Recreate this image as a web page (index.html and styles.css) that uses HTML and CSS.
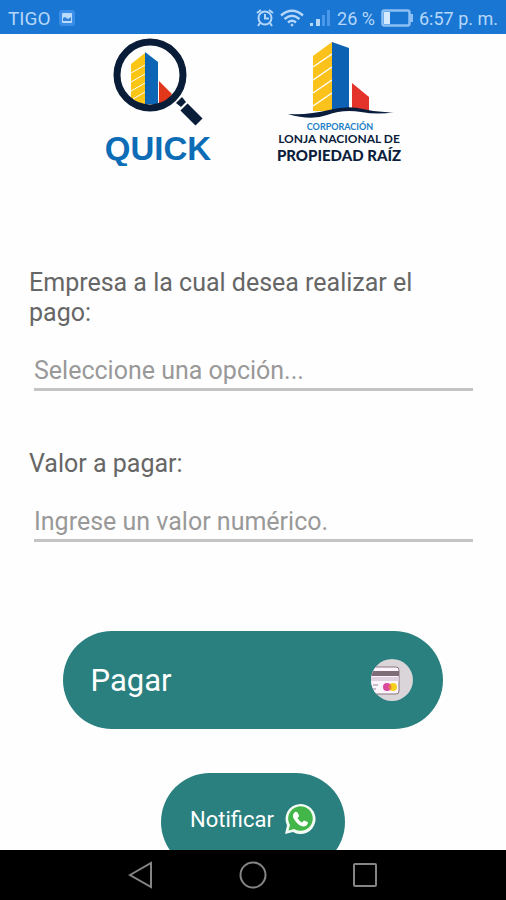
FILE: index.html
```html
<!DOCTYPE html>
<html lang="es">

<head>
    <meta charset="UTF-8" />
    <meta name="viewport" content="width=device-width, initial-scale=1.0" />
    <title>Quick - Pagos</title>
    <link rel="stylesheet" href="styles.css">
</head>

<body>

    <header class="status">
        <span class="carrier">TIGO</span>
        <svg class="status-photo" width="16" height="16" viewBox="0 0 16 16">
            <rect width="16" height="16" rx="3" fill="#3b8ee8" />
            <rect x="3" y="3" width="10" height="10" rx="1" fill="#b9dcfc" />
            <path d="M4 11V8l2-1 3 2 3-2v4z" fill="#3583db" />
        </svg>
        <div class="status-right">
            <svg width="18" height="20" viewBox="0 0 18 20" fill="none" stroke="#b5d7fa" stroke-width="2">
                <circle cx="9" cy="10" r="6.5" />
                <path d="M9 6v4.500h4M1 5l4-3M17 5l-4-3M4 15l-2 3M14 15l2 3" />
            </svg>
            <svg width="24" height="20" viewBox="0 0 24 20" fill="none" stroke="#b5d7fa" stroke-width="2.400">
                <path d="M1 7.500Q12-2 23 7.500M4.500 11q7.500-6.500 15 0M8 14.500q4-3.500 8 0" />
                <circle cx="12" cy="17" r="1" fill="#b5d7fa" stroke-width="1" />
            </svg>
            <svg width="21" height="18" viewBox="0 0 21 18" fill="#b5d7fa">
                <path d="M0 14h3v3H0zM6 10h4v7H6z" />
                <path d="M12 6h3v11h-3zM17 1h3v16h-3z" fill="#4a98e9" />
            </svg>
            <span>26 %</span>
            <svg width="32" height="18" viewBox="0 0 32 18">
                <rect x="1.500" y="1.500" width="27" height="15" rx="2" fill="none" stroke="#8dc0f5" stroke-width="2.500" />
                <path d="M3 3h6v12H3z" fill="#d5eaff" />
                <path d="M29 5h3v8h-3z" fill="#8dc0f5" />
            </svg>
            <span>6:57 p. m.</span>
        </div>
    </header>

    <main class="page">
        <div class="logos">
            <svg class="logo-quick" width="110" height="130" viewBox="0 0 110 130" role="img" aria-label="Quick">
                <path d="M29 28l14-11v51q-8-1-14-6z" fill="#fbc516" />
                <path d="M29 37l14-8M29 46l14-8M29 55l14-8M31 63l12-7" stroke="#fff" stroke-width="1" />
                <path d="M43 16l13 10v42H43z" fill="#0c65b5" />
                <path d="M57 45l13 13-4 6-9 4z" fill="#e2371b" />
                <circle cx="48" cy="39" r="33" fill="none" stroke="#091d38" stroke-width="7" />
                <path d="M74 67l6-6 4 5-5 5z" fill="#091d38" />
                <path d="M82 71l15 15" stroke="#091d38" stroke-width="10" />
                <text x="56" y="124" text-anchor="middle" class="quick-name">QUICK</text>
            </svg>
            <svg class="logo-lonja" width="130" height="130" viewBox="0 0 130 130" role="img" aria-label="Corporación Lonja Nacional de Propiedad Raíz">
                <path d="M39 20l19-14v69H39z" fill="#fbc21c" />
                <path d="M39 31l19-13M39 44l19-13M39 57l19-13M39 70l19-13" stroke="#fff" stroke-width="1.500" />
                <path d="M58 6l17 6v63H58z" fill="#0e62b4" />
                <path d="M78 47l17 14v14H78z" fill="#e3332b" />
                <path d="M14 78q22 1 41-4t34-1 31 3q-15 3-33 0t-34 3-39-1z" fill="#0b1d3c" />
                <text x="66" y="94" text-anchor="middle" class="lonja-top">CORPORACIÓN</text>
                <text x="65" y="107" text-anchor="middle" class="lonja-mid">LONJA NACIONAL DE</text>
                <text x="65" y="125" text-anchor="middle" class="lonja-low">PROPIEDAD RAÍZ</text>
            </svg>
        </div>

        <form class="form">
            <div class="field">
                <label for="empresa">Empresa a la cual desea realizar el pago:</label>
                <select id="empresa" class="input">
                    <option>Seleccione una opción...</option>
                </select>
            </div>
            <div class="field">
                <label for="valor">Valor a pagar:</label>
                <input id="valor" class="input" type="text" inputmode="numeric" placeholder="Ingrese un valor numérico.">
            </div>

            <button type="submit" class="btn btn-pay">
                Pagar
                <svg width="42" height="42" viewBox="0 0 42 42">
                    <clipPath id="round"><circle cx="21" cy="21" r="21" /></clipPath>
                    <g clip-path="url(#round)">
                        <rect width="42" height="42" fill="#d9d5d8" />
                        <rect x="-6" y="8" width="34" height="27" rx="3" fill="#fbf5fb" stroke="#8b7582" />
                        <path d="M0 12h28v5H0z" fill="#806b78" />
                        <path d="M0 18h28v4H0z" fill="#ded0de" />
                        <path d="M2 26h5M2 30h3" stroke="#bba7bb" stroke-width="1.500" />
                        <circle cx="22" cy="28" r="4" fill="#f4cf1c" />
                        <circle cx="16" cy="28" r="4" fill="#d9489e" />
                        <path d="M19 25q3 3 0 6-3-3 0-6" fill="#ee794b" />
                    </g>
                </svg>
            </button>
            <button type="button" class="btn btn-notify">
                Notificar
                <svg width="32" height="32" viewBox="0 0 32 32">
                    <path d="M1 31l2-8.500A15 15 0 1 1 9 29z" fill="#f4fbf5" />
                    <path d="M4.500 27.500l1.500-5.500A12.300 12.300 0 1 1 10 26z" fill="#43b649" />
                    <path d="M10.500 9.500q1-1.500 3 0l1.500 3q.3 1-1.500 2.500 1.500 3 4.500 4.500l2-2q3 .8 4 2-.5 3.500-4 4-4-.2-7.500-4-4-4.500-3.500-7.500.3-1.500 1.500-2.500z" fill="#fff" />
                </svg>
            </button>
        </form>
    </main>

    <nav class="navbar">
        <button class="nav-btn" aria-label="Atrás">
            <svg width="28" height="28" viewBox="0 0 28 28"><path d="M3 14L24 2v24z" /></svg>
        </button>
        <button class="nav-btn" aria-label="Inicio">
            <svg width="28" height="28" viewBox="0 0 28 28"><circle cx="14" cy="14" r="12.500" /></svg>
        </button>
        <button class="nav-btn" aria-label="Recientes">
            <svg width="28" height="28" viewBox="0 0 28 28"><rect x="3" y="3" width="22" height="22" rx="1" /></svg>
        </button>
    </nav>

</body>

</html>
```
FILE: styles.css
```css
* {
    box-sizing: border-box;
}

body {
    margin: 0;
    height: 100vh;
    display: flex;
    flex-direction: column;
    font-family: Roboto, "Liberation Sans", sans-serif;
    background-color: #fefefe;
}

svg {
    flex: none;
}

/* barra de estado */
.status {
    flex: none;
    display: flex;
    align-items: center;
    height: 34px;
    padding: 2px 8px 0;
    font-size: 18px;
    color: #b5d7fa;
    background-color: #1976d2;
    white-space: nowrap;
}

.carrier {
    font-size: 19px;
}

.status-photo {
    margin-left: 8px;
}

.status-right {
    margin-left: auto;
    display: flex;
    align-items: center;
    gap: 6px;
}

.page {
    flex: 1;
    min-height: 0;
    overflow: hidden;
}

.logos {
    display: flex;
    justify-content: center;
    gap: 62px;
    padding-top: 2px;
}

.quick-name {
    font: bold 33px "Liberation Sans", sans-serif;
    fill: #0c6cb6;
}

.lonja-top {
    font: bold 9px Lato, sans-serif;
    fill: #1b80c8;
}

.lonja-mid {
    font: bold 12px Lato, sans-serif;
    fill: #0b1d3c;
}

.lonja-low {
    font: 900 15px Lato, sans-serif;
    fill: #0b1d3c;
}

/* formulario */
.form {
    display: flex;
    flex-direction: column;
    align-items: center;
    padding: 102px 29px 0;
}

.field {
    width: 100%;
    margin-bottom: 58px;
    font-size: 25px;
    line-height: 30px;
    color: #666;
}

.field label {
    display: block;
    padding-right: 40px;
}

.input {
    display: block;
    width: calc(100% - 9px);
    height: 38px;
    margin: 25px 4px 0 5px;
    padding: 0;
    font: inherit;
    color: #999;
    background: none;
    border: none;
    border-bottom: 3px solid #c4c4c4;
    border-radius: 0;
    outline: none;
    appearance: none;
}

.input::placeholder {
    color: #999;
    opacity: 1;
}

.btn {
    display: flex;
    align-items: center;
    height: 98px;
    font-family: inherit;
    color: white;
    background-color: #2a7f7f;
    border: none;
    border-radius: 49px;
    cursor: pointer;
}

.btn-pay {
    justify-content: space-between;
    width: 85%;
    margin-top: 31px;
    padding: 0 30px 0 28px;
    font-size: 31px;
}

.btn-notify {
    gap: 10px;
    margin-top: 44px;
    padding: 0 29px 6px;
    font-size: 22px;
}

/* barra de navegación */
.navbar {
    flex: none;
    display: flex;
    justify-content: center;
    align-items: center;
    gap: 84px;
    height: 50px;
    background-color: #000;
}

.nav-btn {
    display: flex;
    padding: 0;
    background: none;
    border: none;
}

.nav-btn svg {
    fill: none;
    stroke: #858585;
    stroke-width: 2;
}
```
